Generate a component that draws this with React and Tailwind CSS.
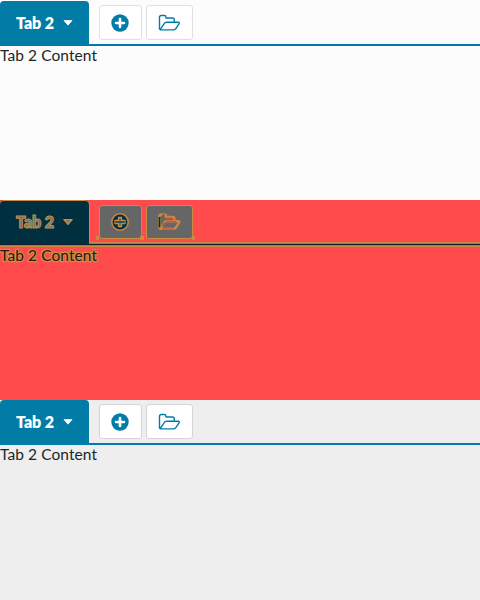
function PlusIcon({ diff }) {
  return (
    <svg width="18" height="18" viewBox="0 0 18 18">
      {diff ? (
        <>
          <circle cx="9" cy="9" r="8.2" fill="#003040" stroke="#c98b43" strokeWidth="1.5" />
          <path d="M7.5 4.5h3v3h3.5v3h-3.5v3h-3v-3H4v-3h3.5z" fill="#666" stroke="#c98b43" strokeWidth="1.3" />
          <path d="M4 9h10" stroke="#003040" strokeWidth="1" />
        </>
      ) : (
        <>
          <circle cx="9" cy="9" r="8.7" fill="#007ca6" />
          <path d="M9 5v8M5 9h8" stroke="#fff" strokeWidth="2.6" strokeLinecap="round" />
        </>
      )}
    </svg>
  );
}

const BACK = "M1.5 15V3.2Q1.5 1.5 3.2 1.5H6.3Q8 1.5 8 3.2V4H14.3Q16.3 4 16.3 6V8";
const FLAP = "M2 15.8L6.2 9.6Q7 8.3 8.5 8.3H20.3Q22 8.3 21 9.8L18 14.3Q17 15.9 15.2 15.9H3.2Q1.5 15.9 1.5 14";

function FolderIcon({ diff }) {
  return (
    <svg width="24" height="18" viewBox="0 0 24 18" fill="none" strokeLinejoin="round">
      {diff ? (
        <>
          <path d={BACK} stroke="#c98b43" strokeWidth="2.4" />
          <path d={FLAP} stroke="#c98b43" strokeWidth="2.4" />
          <path d="M1.5 14.5V4" stroke="#003040" strokeWidth="1.6" />
          <path d="M8 5H15M8 8.3H18M4 16.2H16" stroke="#ed4048" strokeWidth="1.2" />
          <path d="M4 2H7M7 9.3L4 13" stroke="#003040" strokeWidth="0.6" />
        </>
      ) : (
        <>
          <path d={BACK} stroke="#007ca6" strokeWidth="1.4" />
          <path d={FLAP} stroke="#007ca6" strokeWidth="1.4" />
        </>
      )}
    </svg>
  );
}

function DividerLine({ diff }) {
  if (!diff) return <div className="h-[2px] bg-[#007ca6]" />;
  return (
    <div className="flex h-[5px] flex-col">
      <div className="ml-[90px] h-px bg-[#c98b43]" />
      <div className="ml-[89px] h-px bg-[#ff4b4b]" />
      <div className="h-px bg-[#14202e]" />
      <div className="h-px bg-[#ff4b4b]" />
      <div className="h-px bg-[#c98b43]" />
    </div>
  );
}

function Panel({ kind }) {
  const diff = kind === "diff";
  const bg = diff ? "bg-[#ff4b4b]" : kind === "first" ? "bg-[#fcfcfc]" : "bg-[#eeeeee]";
  const pad = kind === "first" ? "pt-px" : "";
  const button = diff
    ? "h-[34px] pb-px bg-[#666] border-[#c98b43]"
    : kind === "first"
      ? "h-[35px] bg-white border-[#e0e0e0]"
      : "h-[35px] bg-white border-[#d5d5d5]";
  return (
    <section className={`h-[200px] overflow-hidden ${bg} ${pad}`}>
      <div className={`flex ${diff ? "h-[42px]" : "h-[43px]"}`}>
        <div
          className={`flex w-[89px] items-center rounded-t-[4px] pl-[16px] ${diff ? "h-[44px] bg-[#003040] pb-px shadow-[1px_0_0_#c98b43,inset_0_1px_0_#c98b43]" : "h-[43px] bg-[#007ca6]"}`}
        >
          <span
            className={`w-[47px] whitespace-nowrap text-[16px] font-extrabold tracking-[-0.1px] ${diff ? "text-[#66777c] [-webkit-text-stroke:1px_#c98b43]" : "text-white"}`}
          >
            Tab 2
          </span>
          <svg width="10" height="6" viewBox="0 0 10 6">
            <path
              d="M1 .6h8L5 5.2z"
              fill={diff ? "#66777c" : "#fff"}
              stroke={diff ? "#c98b43" : "#fff"}
              strokeWidth={diff ? 1.5 : 0.8}
              strokeLinejoin="round"
            />
          </svg>
        </div>
        <div className={`ml-[10px] flex gap-1 ${diff ? "pt-[5px]" : "pt-1"}`}>
          <div className={`flex w-[43px] items-center rounded-[3px] border pl-[11px] ${button}`}>
            <PlusIcon diff={diff} />
          </div>
          <div className={`flex w-[47px] items-center justify-center rounded-[3px] border ${button}`}>
            <FolderIcon diff={diff} />
          </div>
          {diff && (
            <div className="relative h-0 w-0">
              <div className="absolute -left-[101px] top-[31px] h-1 w-[3px] bg-[#c98b43]" />
              <div className="absolute -left-[57px] top-[31px] h-1 w-1 bg-[#c98b43]" />
              <div className="absolute -left-[5px] top-[31px] h-1 w-[3px] bg-[#c98b43]" />
            </div>
          )}
        </div>
      </div>
      <DividerLine diff={diff} />
      <p
        className={`whitespace-nowrap text-[15.5px] leading-[18px] tracking-[0.08px] ${diff ? "-mt-px text-[#271616] [paint-order:stroke_fill] [-webkit-text-stroke:2.6px_#d28b43]" : "text-[#212529]"}`}
      >
        Tab 2 Content
      </p>
    </section>
  );
}

export default function App() {
  return (
    <main className="h-[600px] w-[480px] overflow-hidden font-['Lato','Noto_Sans',sans-serif]">
      <Panel kind="first" />
      <Panel kind="diff" />
      <Panel kind="last" />
    </main>
  );
}
